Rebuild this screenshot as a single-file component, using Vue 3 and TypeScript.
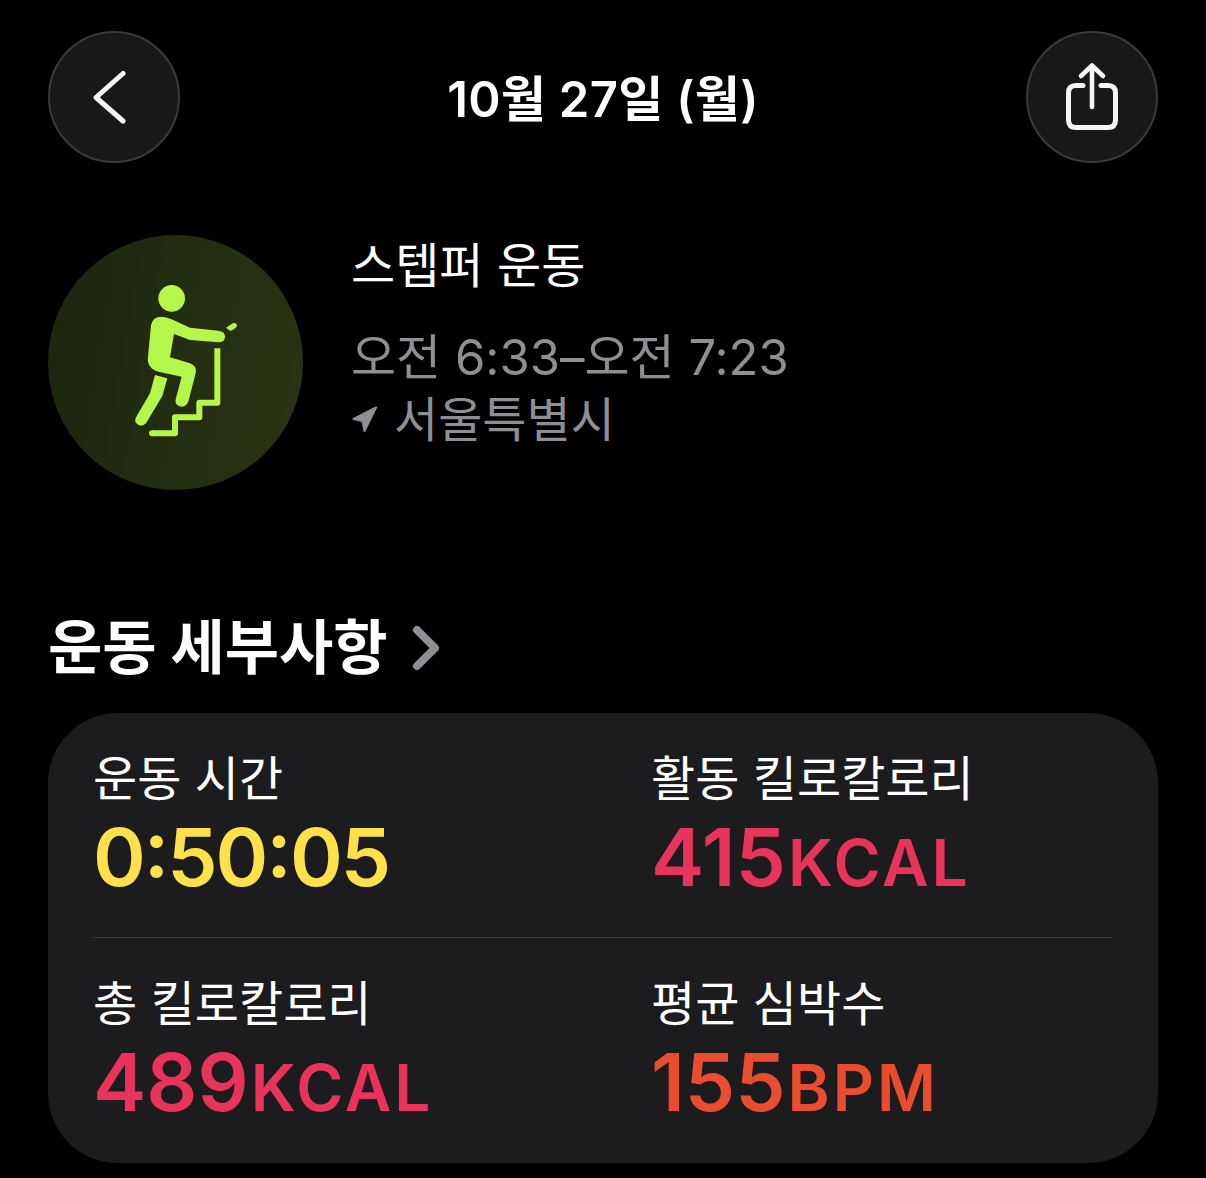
<script setup lang="ts">
interface Metric {
  label: string
  value: string
  unit?: string
  tone: string
}

const topRow: Metric[] = [
  { label: '운동 시간', value: '0:50:05', tone: 'yellow' },
  { label: '활동 킬로칼로리', value: '415', unit: 'KCAL', tone: 'pink' },
]
const bottomRow: Metric[] = [
  { label: '총 킬로칼로리', value: '489', unit: 'KCAL', tone: 'pink' },
  { label: '평균 심박수', value: '155', unit: 'BPM', tone: 'red' },
]
const rows = [topRow, bottomRow]
</script>

<template>
  <div class="screen">
    <header class="top-bar">
      <button class="round-btn" aria-label="back">
        <svg class="back-icon" width="36" height="54" viewBox="0 0 36 54">
          <path d="M31 3.5 L4 27.5 L31 51" fill="none" stroke="#f5f5f5" stroke-width="5" stroke-linecap="round" stroke-linejoin="round" />
        </svg>
      </button>
      <h1 class="date">10월 27일 (월)</h1>
      <button class="round-btn" aria-label="share">
        <svg width="56" height="70" viewBox="0 0 56 70">
          <path d="M19 23.5 H12 Q4.5 23.5 4.5 31 V58 Q4.5 65.5 12 65.5 H44 Q51.5 65.5 51.5 58 V31 Q51.5 23.5 44 23.5 H37" fill="none" stroke="#f5f5f5" stroke-width="5" stroke-linecap="round" />
          <path d="M28 45 V4 M17 14 L28 3.5 L39 14" fill="none" stroke="#f5f5f5" stroke-width="4.6" stroke-linecap="round" stroke-linejoin="round" />
        </svg>
      </button>
    </header>

    <section class="workout">
      <div class="badge">
        <svg class="stepper" width="170" height="190" viewBox="0 0 510 570">
          <circle cx="245" cy="115" r="40" fill="#b4f64a" />
          <path d="M215 170 Q228 170 245 178 L300 203 L385 212 Q405 214 405 230 Q405 247 385 247 L300 240 L252 222 L240 292 L300 310 Q322 318 317 340 L295 425 Q288 440 274 440 Q253 438 257 418 L275 350 L205 335 Q170 325 174 290 L183 195 Q188 170 215 170 Z" fill="#b4f64a" />
          <path d="M195 345 L232 355 L217 408 L168 490 Q155 503 142 493 Q130 483 140 468 L180 400 Z" fill="#b4f64a" />
          <path d="M408 203 L428 190 Q438 187 441 196 Q441 203 432 208 L420 213 Z" fill="#b4f64a" />
          <path d="M186 520 H255 V472 H328 V428 H382 V265" fill="none" stroke="#b4f64a" stroke-width="18" stroke-linejoin="round" />
          <circle cx="186" cy="520" r="9" fill="#b4f64a" />
        </svg>
      </div>
      <div class="workout-text">
        <div class="workout-name">스텝퍼 운동</div>
        <div class="workout-time">오전 6:33–오전 7:23</div>
        <div class="workout-place">
          <svg width="26" height="28" viewBox="0 0 26 28">
            <path d="M1.5 13 L24 1.5 L12.5 25 L10.5 15 Z" fill="#8e8e93" stroke="#8e8e93" stroke-width="2" stroke-linejoin="round" />
          </svg>
          <span>서울특별시</span>
        </div>
      </div>
    </section>

    <h2 class="section-title">
      운동 세부사항
      <svg width="28" height="46" viewBox="0 0 28 46">
        <path d="M5 5 L23 23 L5 41" fill="none" stroke="#8e8e93" stroke-width="8" stroke-linecap="round" stroke-linejoin="round" />
      </svg>
    </h2>

    <section class="card">
      <template v-for="(row, i) in rows" :key="i">
        <div v-if="i > 0" class="divider"></div>
        <div class="row">
          <div v-for="m in row" :key="m.label" class="metric">
            <div class="metric-label">{{ m.label }}</div>
            <div class="metric-value" :class="m.tone">
              {{ m.value }}<span v-if="m.unit" class="unit">{{ m.unit }}</span>
            </div>
          </div>
        </div>
      </template>
    </section>
  </div>
</template>

<style>
html, body { background: #000; }
</style>

<style scoped>
.screen {
  width: 1206px;
  height: 1178px;
  box-sizing: border-box;
  padding: 31px 48px 0 48px;
  background: #000;
  color: #fff;
  font-family: Inter, "Noto Sans CJK KR", sans-serif;
  overflow: hidden;
}

.top-bar { display: flex; justify-content: space-between; align-items: center; height: 132px; }
.round-btn {
  width: 132px;
  height: 132px;
  padding: 0;
  border-radius: 50%;
  border: 2px solid #3a3a3a;
  background: #181818;
  box-sizing: border-box;
  display: flex;
  align-items: center;
  justify-content: center;
}
.back-icon { margin-right: 9px; }
.date { margin: 0 0 3px 0; font-size: 49px; font-weight: 600; letter-spacing: 0.3px; }

.workout { display: flex; gap: 49px; margin-top: 72px; }
.badge {
  width: 255px;
  height: 255px;
  border-radius: 50%;
  background: linear-gradient(100deg, #1c2610, #2a3413);
  display: flex;
  align-items: center;
  justify-content: center;
  flex-shrink: 0;
}
.stepper { margin: 0 2px 15px 0; }
.workout-text { padding-top: 2px; }
.workout-name { font-size: 48px; line-height: 58px; margin-left: -1px; }
.workout-time { font-size: 49px; line-height: 62px; color: #8e8e93; margin-top: 32px; margin-left: -1px; }
.workout-place { font-size: 48px; line-height: 62px; color: #8e8e93; display: flex; align-items: center; gap: 16px; }

.section-title {
  margin: 120px 0 0 0;
  font-size: 59px;
  line-height: 76px;
  font-weight: 700;
  display: flex;
  align-items: center;
  gap: 24px;
}

.card {
  margin-top: 27px;
  height: 450px;
  box-sizing: border-box;
  padding: 37px 45px 0 45px;
  border-radius: 70px;
  background: #1c1c1e;
}
.row { display: grid; grid-template-columns: 558px 1fr; height: 187px; }
.divider { height: 1px; background: #3a3a3c; margin: 0 0 37px 0; }
.metric-label { font-size: 48px; line-height: 58px; }
.metric-value { font-size: 80px; line-height: 98px; font-weight: 590; font-feature-settings: "calt" 1; }
.metric-value.yellow { letter-spacing: -2px; }
.unit { font-size: 64px; margin-left: 2px; letter-spacing: 3px; font-weight: 640; }
.yellow { color: #fce14b; }
.pink { color: #e8335c; }
.red { color: #ea4c2f; }
</style>
